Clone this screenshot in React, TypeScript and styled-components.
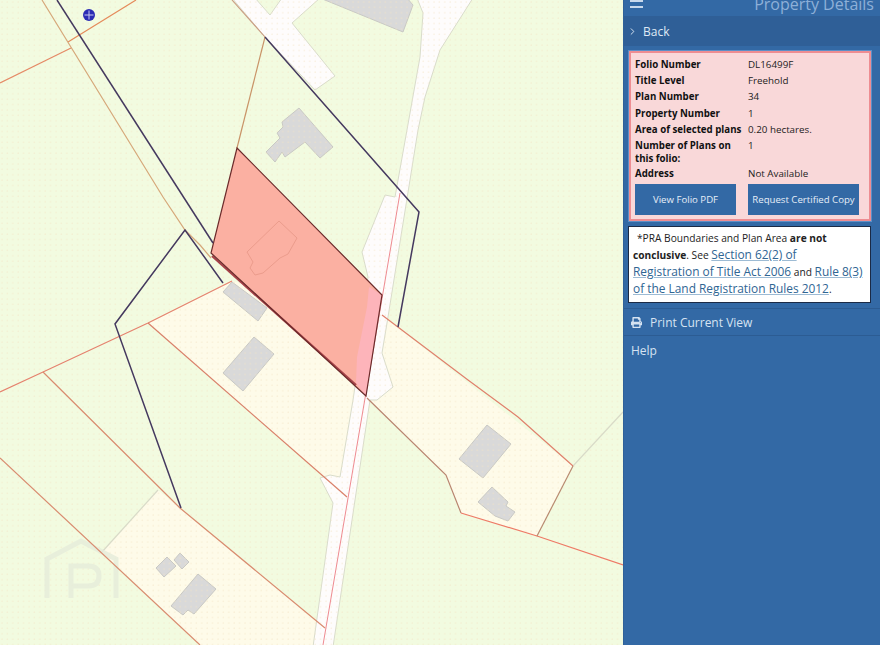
import React from "react";
import styled, { createGlobalStyle } from "styled-components";
import { FaPrint } from "react-icons/fa";
import { LuChevronRight } from "react-icons/lu";

const Global = createGlobalStyle`
  html, body { margin: 0; padding: 0; height: 100%; overflow: hidden; }
  body { font-family: "Open Sans", "Liberation Sans", sans-serif; }
  #root { height: 100%; }
`;

const Page = styled.div`
  display: flex;
  width: 880px;
  height: 645px;
  overflow: hidden;
`;

const MapArea = styled.div`
  width: 623px;
  height: 645px;
  flex: none;
  background: #f2fbe0;
`;

const MapSvg = styled.svg`
  display: block;
  width: 623px;
  height: 645px;
`;

const Sidebar = styled.aside`
  width: 257px;
  height: 645px;
  flex: none;
  display: flex;
  flex-direction: column;
  background: #3369a5;
  border-left: 1px solid #2f6199;
  box-sizing: border-box;
`;

const Header = styled.header`
  height: 16px;
  flex: none;
  display: flex;
  justify-content: space-between;
  align-items: flex-end;
  padding: 0 6px;
  overflow: hidden;
`;

const Burger = styled.span`
  width: 13px;
  height: 8px;
  flex: none;
  margin-bottom: 8px;
  border-top: 2px solid #c9d9ec;
  border-bottom: 2px solid #c9d9ec;
  box-sizing: border-box;
`;

const Title = styled.h1`
  margin: 0 0 1px;
  font-size: 16px;
  line-height: 22px;
  font-weight: 400;
  color: #8eb0d8;
  white-space: nowrap;
`;

const BackRow = styled.div`
  height: 30px;
  flex: none;
  display: flex;
  align-items: center;
  gap: 5px;
  padding-left: 3px;
  background: #2f5f97;
  color: #dfe9f5;
  font-size: 12px;
`;

const PropertyCard = styled.section`
  margin: 5px 9px 5px 5px;
  height: 170px;
  flex: none;
  box-sizing: border-box;
  padding: 4px 4px 0;
  background: #f9d8d9;
  border: 2px solid #ee8d92;
  outline: 1px solid #5c8fc7;
`;

const FactGrid = styled.dl`
  margin: 0;
  display: grid;
  grid-template-columns: 113px 1fr;
  font-size: 9.8px;
  line-height: 16.2px;
  color: #1c1c1c;
`;

const FactLabel = styled.dt`
  font-size: 9.7px;
  font-weight: 700;
  color: #111;
  line-height: 16.2px;
`;

const FactLabelTall = styled(FactLabel)`
  line-height: 12.6px;
  padding: 2px 0 1px;
`;

const FactValue = styled.dd`
  margin: 0;
`;

const ButtonRow = styled.div`
  display: grid;
  grid-template-columns: 101px 111px;
  justify-content: space-between;
  padding-right: 6px;
  margin-top: 1.6px;
`;

const ActionButton = styled.button`
  height: 31px;
  padding: 0;
  border: none;
  background: #3369a5;
  color: #e6eef8;
  font-family: inherit;
  font-size: 9.65px;
`;

const Notice = styled.section`
  margin: 0 9px 0 4px;
  height: 77px;
  flex: none;
  box-sizing: border-box;
  padding: 3px 4px 0;
  background: #fff;
  border: 1px solid #1b2a45;
  font-size: 10.2px;
  line-height: 16.1px;
  color: #222;
`;

const Indent = styled.span`
  padding-left: 4px;
`;

const LawLink = styled.a`
  font-size: 11.9px;
  color: #2f6593;
  text-decoration: underline;
  text-decoration-color: #9dbbd4;
`;

const MenuRow = styled.div`
  height: 26px;
  margin-top: 5px;
  flex: none;
  display: flex;
  align-items: center;
  gap: 8px;
  padding-left: 7px;
  color: #d6e3f2;
  font-size: 12px;
  border-top: 1px solid #2c5c93;
  border-bottom: 1px solid #2c5c93;
`;

const HelpRow = styled.div`
  padding: 6px 7px;
  color: #d6e3f2;
  font-size: 12px;
  line-height: 18px;
`;

const facts: [string, string, boolean?][] = [
  ["Folio Number", "DL16499F"],
  ["Title Level", "Freehold"],
  ["Plan Number", "34"],
  ["Property Number", "1"],
  ["Area of selected plans", "0.20 hectares."],
  ["Number of Plans on this folio:", "1", true],
  ["Address", "Not Available"],
];

const buildings = [
  "299,108 333,147 320,158 305,142 285,157 282,152 275,162 266,152 280,138 277,133 283,127 282,122",
  "320,-2 403,32 413,5 407,-2",
  "223,292 232,282 267,308 258,321",
  "254,337 274,354 243,391 223,373",
  "487,425 511,444 483,478 459,459",
  "492,487 508,502 506,506 515,512 508,521 495,516 478,502",
  "167,557 176,566 164,577 156,568",
  "180,553 189,562 182,569 174,560",
  "198,574 216,589 194,614 188,610 183,615 171,606",
];

const redLines: [string, string, number][] = [
  ["0,83 71,48", "#e58a66", 1.2],
  ["68,42 136,0", "#e58a5a", 1.2],
  ["0,392 43,372 148,323 232,281", "#e5826e", 1.2],
  ["43,372 180,508 325,628", "#d98c70", 1.2],
  ["148,323 347,497", "#d9806a", 1.2],
  ["0,458 200,645", "#d98c70", 1.2],
  ["367,398 446,475 461,513", "#b98570", 1.2],
  ["461,513 537,536 623,565", "#ee7a66", 1.2],
  ["382,315 468,380 518,417 573,466", "#e0806c", 1.2],
  ["573,466 537,536", "#b98a70", 1.2],
  ["42,0 163,197 185,230 200,245 211,258", "#d6a87a", 1.2],
  ["232,0 265,37", "#c99a80", 1.1],
  ["265,37 237,148", "#c99468", 1.2],
  ["400,193 323,645", "#ee8a90", 1],
];

const darkLines = [
  "57,0 213,243",
  "223,283 185,230 115,324 181,508",
  "265,37 419,212 398,327",
];

const PropertyMap = () => (
  <MapSvg viewBox="0 0 623 645" aria-hidden="true">
    <defs>
      <pattern id="dots" width="5.4" height="5.4" patternUnits="userSpaceOnUse">
        <circle cx="2" cy="2" r="0.8" fill="#f3e3c4" fillOpacity="0.5" />
      </pattern>
    </defs>
    <rect width="623" height="645" fill="#f2fbe0" />

    <polygon points="382,315 573,466 537,536 461,513 446,475 367,398 347,497 148,323 232,281" fill="#fefbe9" />
    <polygon points="158,490 325,628 315,645 200,645 102,552" fill="#fefbe9" />

    <g fill="#fefcfc" stroke="#d9dccb" strokeWidth="1">
      <polygon points="232,-2 265,37 315,90 335,76 292,23 320,-2 282,-2 270,15 255,-2" />
      <polygon points="417,-2 423,13 420,57 395,197 385,195 362,252 368,277 357,373 353,400 340,477 330,475 320,478 333,503 313,647 333,647 370,400 377,400 393,387 382,353 388,317 418,130 425,97 440,50 473,-2" />
    </g>

    <g fill="#d9d9d9" stroke="#c9c9c4" strokeWidth="1" strokeLinejoin="round">
      {buildings.map((b) => (
        <polygon key={b} points={b} />
      ))}
    </g>

    <rect width="623" height="645" fill="url(#dots)" />
    <line x1="158" y1="490" x2="102" y2="552" stroke="#d9dbc8" strokeWidth="1.2" />
    <line x1="573" y1="466" x2="623" y2="412" stroke="#d9dbc8" strokeWidth="1.2" />

    <g fill="none" stroke="#e6eddb" strokeWidth="5" opacity="0.8">
      <path d="M47,598 V559 L81,541 L116,559 V598" />
      <path d="M71,598 V566 H88 Q99,566 99,576 Q99,586 88,586 H71" />
    </g>

    {redLines.map(([p, c, w]) => (
      <polyline key={p} points={p} fill="none" stroke={c} strokeWidth={w} />
    ))}

    <polygon points="237,148 382,295 366,396 211,253" fill="#fbb0a2" />
    <polygon points="369,287 382,295 366,396 356,383 357,357 367,307" fill="#fdb4ba" />
    <polygon
      points="279,221 297,238 288,254 280,258 263,273 255,275 250,268 253,262 247,252"
      fill="none"
      stroke="#eb9c8c"
      strokeWidth="1"
    />
    <polyline points="212,256 356,385" fill="none" stroke="#a6434a" strokeWidth="2.2" />
    <polygon points="237,148 382,295 366,396 211,253" fill="none" stroke="#6b2b2b" strokeWidth="1.2" />

    {darkLines.map((p) => (
      <polyline key={p} points={p} fill="none" stroke="#45395f" strokeWidth="1.5" />
    ))}

    <circle cx="89" cy="15" r="6" fill="#2c2cb4" />
    <path d="M89,10.5 V19.5 M84.5,15 H93.5" stroke="#c8c8f0" strokeWidth="1" />
  </MapSvg>
);

export default function App() {
  return (
    <Page>
      <Global />
      <MapArea>
        <PropertyMap />
      </MapArea>
      <Sidebar>
        <Header>
          <Burger />
          <Title>Property Details</Title>
        </Header>
        <BackRow>
          <LuChevronRight size={11} />
          <span>Back</span>
        </BackRow>
        <PropertyCard>
          <FactGrid>
            {facts.map(([label, value, tall]) => (
              <React.Fragment key={label}>
                {tall ? <FactLabelTall>{label}</FactLabelTall> : <FactLabel>{label}</FactLabel>}
                <FactValue>{value}</FactValue>
              </React.Fragment>
            ))}
          </FactGrid>
          <ButtonRow>
            <ActionButton>View Folio PDF</ActionButton>
            <ActionButton>Request Certified Copy</ActionButton>
          </ButtonRow>
        </PropertyCard>
        <Notice>
          <Indent>*PRA Boundaries and Plan Area </Indent>
          <b>are not conclusive</b>. See{" "}
          <LawLink>Section 62(2) of Registration of Title Act 2006</LawLink> and{" "}
          <LawLink>Rule 8(3) of the Land Registration Rules 2012</LawLink>.
        </Notice>
        <MenuRow>
          <FaPrint size={11} />
          <span>Print Current View</span>
        </MenuRow>
        <HelpRow>Help</HelpRow>
      </Sidebar>
    </Page>
  );
}
